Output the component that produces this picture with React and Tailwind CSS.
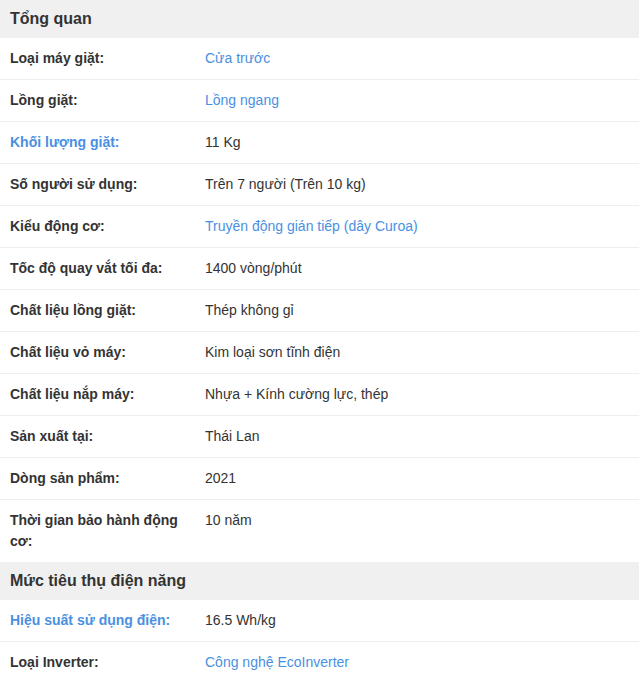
const sections = [
  {
    title: 'Tổng quan',
    rows: [
      { label: 'Loại máy giặt:', value: 'Cửa trước', valueLink: true },
      { label: 'Lồng giặt:', value: 'Lồng ngang', valueLink: true },
      { label: 'Khối lượng giặt:', value: '11 Kg', labelLink: true },
      { label: 'Số người sử dụng:', value: 'Trên 7 người (Trên 10 kg)' },
      { label: 'Kiểu động cơ:', value: 'Truyền động gián tiếp (dây Curoa)', valueLink: true },
      { label: 'Tốc độ quay vắt tối đa:', value: '1400 vòng/phút' },
      { label: 'Chất liệu lồng giặt:', value: 'Thép không gỉ' },
      { label: 'Chất liệu vỏ máy:', value: 'Kim loại sơn tĩnh điện' },
      { label: 'Chất liệu nắp máy:', value: 'Nhựa + Kính cường lực, thép' },
      { label: 'Sản xuất tại:', value: 'Thái Lan' },
      { label: 'Dòng sản phẩm:', value: '2021' },
      { label: 'Thời gian bảo hành động cơ:', value: '10 năm' },
    ],
  },
  {
    title: 'Mức tiêu thụ điện năng',
    rows: [
      { label: 'Hiệu suất sử dụng điện:', value: '16.5 Wh/kg', labelLink: true },
      { label: 'Loại Inverter:', value: 'Công nghệ EcoInverter', valueLink: true },
    ],
  },
];

export default function App() {
  return (
    <div className="w-[639px] bg-white font-['Liberation_Sans',Arial,sans-serif] text-[14px] text-[#333]">
      {sections.map((s) => (
        <div key={s.title}>
          <h3 className="h-[38px] bg-[#f0f0f0] px-[10px] text-[16px] font-bold leading-[38px] text-[#333]">
            {s.title}
          </h3>
          <ul>
            {s.rows.map((r) => (
              <li
                key={r.label}
                className="flex border-b border-[#eeeeee] py-[10px] leading-[21px] last:border-b-0"
              >
                <span
                  className={`w-[205px] shrink-0 px-[10px] font-bold ${r.labelLink ? 'text-[#4a90e2]' : 'text-[#333]'}`}
                >
                  {r.label}
                </span>
                <span className={r.valueLink ? 'text-[#4a90e2]' : 'text-[#333]'}>{r.value}</span>
              </li>
            ))}
          </ul>
        </div>
      ))}
    </div>
  );
}
